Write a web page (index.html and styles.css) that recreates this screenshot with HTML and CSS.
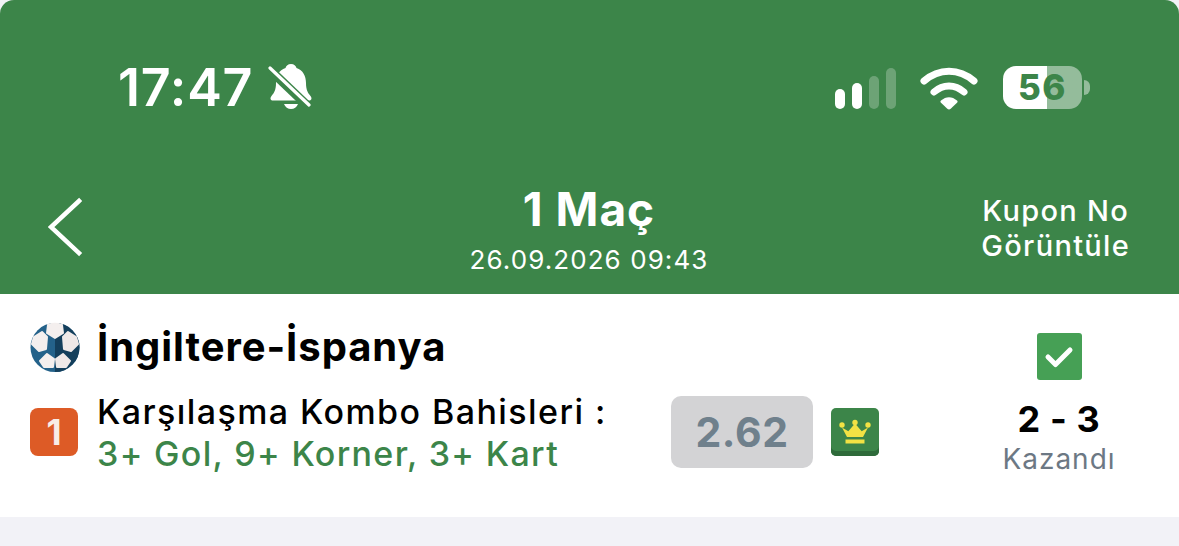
FILE: index.html
```html
<!DOCTYPE html>
<html lang="tr">
<head>
<meta charset="utf-8">
<title>1 Maç</title>
<link rel="stylesheet" href="styles.css">
</head>
<body>
<div class="page">
  <header class="header">
    <div class="status">
      <div class="status-left">
        <span class="time">17:47</span>
        <svg class="bell" viewBox="0 0 44 47" width="44" height="47">
          <path fill="#fff" d="M23 1c-3 0-5 2-5.500 4C11 7 8 13 8 20c0 7-2 10-4.500 13C2 35 2 37.500 5 37.500h36c3 0 3-2.500 1.500-4.500C40 30 38 27 38 20c0-7-3-13-9.500-15C28 3 26 1 23 1z"/>
          <path fill="#fff" d="M16 41h14c-1 3-4 5-7 5s-6-2-7-5z"/>
          <path stroke="#3c8549" stroke-width="9" d="M-2 3 44 47"/>
          <path stroke="#fff" stroke-width="3.200" stroke-linecap="round" d="M2 5 41 42"/>
        </svg>
      </div>
      <div class="status-right">
        <div class="signal">
          <span class="bar bar-1"></span>
          <span class="bar bar-2"></span>
          <span class="bar bar-3"></span>
          <span class="bar bar-4"></span>
        </div>
        <svg class="wifi" viewBox="0 0 60 44" width="60" height="44">
          <path fill="none" stroke="#fff" stroke-width="7" stroke-linecap="round" d="M5 15C20 2 40 2 55 15"/>
          <path fill="none" stroke="#fff" stroke-width="7" stroke-linecap="round" d="M15 26C24 18 36 18 45 26"/>
          <path fill="#fff" d="M22 34.500c5-4.500 11-4.500 16 0 .8.800.8 1.500 0 2.300l-6.300 6c-1 .8-2.400.8-3.400 0l-6.300-6c-.8-.8-.8-1.500 0-2.300z"/>
        </svg>
        <div class="battery">
          <div class="battery-body">
            <span class="battery-level">56</span>
          </div>
          <span class="battery-cap"></span>
        </div>
      </div>
    </div>
    <div class="nav">
      <svg class="back" viewBox="0 0 36 62" width="36" height="62">
        <path fill="none" stroke="#fff" stroke-width="4.500" stroke-linecap="square" d="M31 5 3 31 31 57"/>
      </svg>
      <div class="nav-title">
        <span class="title">1 Maç</span>
        <span class="date">26.09.2026 09:43</span>
      </div>
      <div class="coupon">Kupon No<br>Görüntüle</div>
    </div>
  </header>

  <main class="card">
    <div class="match">
      <div class="match-head">
        <svg class="ball" viewBox="0 0 50 50" width="50" height="50">
          <defs><clipPath id="ball-right"><rect x="25" y="0" width="25" height="50"/></clipPath></defs>
          <circle cx="25" cy="25.500" r="24.500" fill="#24628a"/>
          <circle cx="25" cy="25.500" r="24.500" fill="#143f5c" clip-path="url(#ball-right)"/>
          <g stroke-linejoin="round" stroke-width="2">
            <path fill="#f4efee" stroke="#f4efee" d="M18 3C22 1.500 28 1.500 32 3L33 11 25 16 17 11z"/>
            <path fill="#efe9e8" stroke="#efe9e8" d="M33 15 38 10 46 15 48 22 41 29 34 27z"/>
            <path fill="#f4efee" stroke="#f4efee" d="M17 15 12 10 4 15 2 22 9 29 16 27z"/>
            <path fill="#f4efee" stroke="#f4efee" d="M17 32 24 37 23 45 14 45 10 39z"/>
            <path fill="#efe9e8" stroke="#efe9e8" d="M33 32 26 37 27 45 36 45 40 39z"/>
          </g>
        </svg>
        <span class="team">İngiltere-İspanya</span>
      </div>
      <div class="pick">
        <span class="pick-no">1</span>
        <div class="pick-text">
          <span class="market">Karşılaşma Kombo Bahisleri :</span>
          <span class="selection">3+ Gol, 9+ Korner, 3+ Kart</span>
        </div>
      </div>
    </div>
    <div class="odds">
      <span class="odd">2.62</span>
      <span class="crown">
        <svg viewBox="0 0 32 28" width="32" height="28">
          <path fill="#f2e244" d="M3 10.500 8 20h16l5-9.500-6.300 3.800L16 6.500 9.300 14.300z"/>
          <circle cx="3" cy="8" r="2.700" fill="#f2e244"/>
          <circle cx="16" cy="5.500" r="2.700" fill="#f2e244"/>
          <circle cx="29" cy="8" r="2.700" fill="#f2e244"/>
          <rect x="6.500" y="22.500" width="19" height="4" fill="#f2e244"/>
        </svg>
      </span>
    </div>
    <div class="result">
      <span class="check">
        <svg viewBox="0 0 30 26" width="30" height="26">
          <path fill="none" stroke="#fff" stroke-width="5" stroke-linecap="round" stroke-linejoin="round" d="M4 13 11.500 20.500 26 6"/>
        </svg>
      </span>
      <span class="score">2 - 3</span>
      <span class="status-text">Kazandı</span>
    </div>
  </main>
</div>
</body>
</html>
```

FILE: styles.css
```css
* {
  box-sizing: border-box;
}

html,
body {
  margin: 0;
  background: #f2f2f7;
}

body {
  font-family: Inter, "Liberation Sans", sans-serif;
  -webkit-font-smoothing: antialiased;
}

.page {
  width: 1179px;
  height: 546px;
  overflow: hidden;
  background: #f2f2f7;
  display: flex;
  flex-direction: column;
}

.header {
  height: 294px;
  flex: none;
  background: #3c8549;
  border-radius: 14px 14px 0 0;
  color: #fff;
  display: flex;
  flex-direction: column;
}

.status {
  height: 176px;
  padding: 60px 89px 0 118px;
  display: flex;
  justify-content: space-between;
  align-items: flex-start;
}

.status-left {
  display: flex;
  align-items: center;
  gap: 15px;
  height: 56px;
}

.time {
  font-size: 52px;
  font-weight: 600;
  line-height: 56px;
  letter-spacing: 0.8px;
}

.bell {
  flex: none;
  margin-bottom: 4px;
}

.status-right {
  display: flex;
  align-items: center;
  height: 56px;
}

.signal {
  display: flex;
  align-items: flex-end;
  gap: 7px;
  height: 41px;
  margin-right: 23px;
}

.bar {
  width: 10px;
  border-radius: 5px;
  background: #fff;
}

.bar-1 {
  height: 20px;
}

.bar-2 {
  height: 26px;
}

.bar-3 {
  height: 33px;
  background: rgba(255, 255, 255, 0.25);
}

.bar-4 {
  height: 41px;
  background: rgba(255, 255, 255, 0.25);
}

.wifi {
  flex: none;
  margin-right: 24px;
}

.battery {
  display: flex;
  align-items: center;
  gap: 2px;
  margin-bottom: 2px;
}

.battery-body {
  width: 79px;
  height: 43px;
  border-radius: 13px;
  background: linear-gradient(90deg, #fff 0 56%, rgba(255, 255, 255, 0.45) 56%);
  display: flex;
  align-items: center;
  justify-content: center;
}

.battery-level {
  font-size: 35px;
  font-weight: 800;
  color: #3c8549;
  line-height: 1;
  letter-spacing: 1.5px;
}

.battery-cap {
  width: 6px;
  height: 15px;
  border-radius: 0 8px 8px 0;
  background: rgba(255, 255, 255, 0.45);
}

.nav {
  flex: 1;
  display: grid;
  grid-template-columns: 1fr auto 1fr;
  align-items: center;
  padding: 0 49px 12px 48px;
}

.back {
  margin-bottom: 4px;
}

.nav-title {
  display: flex;
  flex-direction: column;
  align-items: center;
  gap: 6px;
}

.title {
  font-size: 46px;
  font-weight: 700;
  line-height: 56px;
  letter-spacing: 1px;
}

.date {
  font-size: 26px;
  line-height: 34px;
  letter-spacing: 1.07px;
  font-weight: 400;
}

.coupon {
  justify-self: end;
  text-align: center;
  font-size: 29px;
  font-weight: 500;
  line-height: 35px;
  letter-spacing: 1.3px;
  margin-bottom: 3px;
}

.card {
  height: 223px;
  flex: none;
  background: #fff;
  display: flex;
  align-items: flex-start;
  padding: 28px 0 0 30px;
}

.match {
  width: 641px;
  flex: none;
}

.match-head {
  display: flex;
  align-items: center;
  gap: 17px;
  height: 50px;
}

.ball {
  flex: none;
}

.team {
  font-size: 40px;
  font-weight: 700;
  color: #000;
  line-height: 52px;
  letter-spacing: 0.95px;
}

.pick {
  display: flex;
  align-items: center;
  gap: 19px;
  margin-top: 16px;
}

.pick-no {
  width: 48px;
  height: 48px;
  flex: none;
  border-radius: 8px;
  background: #dd5b26;
  color: #f8ede6;
  font-size: 35px;
  font-weight: 700;
  display: flex;
  align-items: center;
  justify-content: center;
}

.pick-text {
  display: flex;
  flex-direction: column;
  padding-top: 3px;
}

.market {
  font-size: 34px;
  font-weight: 500;
  line-height: 42px;
  letter-spacing: 1.42px;
  color: #000;
}

.selection {
  font-size: 34px;
  font-weight: 500;
  line-height: 42px;
  letter-spacing: 1.33px;
  color: #3c8549;
}

.odds {
  display: flex;
  align-items: center;
  gap: 18px;
  margin-top: 74px;
  flex: none;
}

.odd {
  width: 142px;
  height: 72px;
  border-radius: 10px;
  background: #d3d3d5;
  color: #6f808c;
  font-size: 41px;
  font-weight: 700;
  display: flex;
  align-items: center;
  justify-content: center;
  letter-spacing: 0.6px;
}

.crown {
  width: 48px;
  height: 48px;
  border-radius: 5px;
  background: #3c8549;
  box-shadow: inset 0 -5px 0 #2e6a3a;
  display: flex;
  align-items: center;
  justify-content: center;
  padding-bottom: 2px;
}

.result {
  flex: 1;
  display: flex;
  flex-direction: column;
  align-items: center;
  padding-left: 60px;
  margin-top: 11px;
}

.check {
  width: 45px;
  height: 47px;
  border-radius: 3px;
  background: #46a055;
  display: flex;
  align-items: center;
  justify-content: center;
}

.score {
  margin-top: 18px;
  font-size: 36px;
  font-weight: 700;
  line-height: 42px;
  letter-spacing: 0.6px;
  color: #000;
}

.status-text {
  margin-top: 1px;
  font-size: 28px;
  line-height: 36px;
  color: #6c7884;
  letter-spacing: 1px;
}
```
